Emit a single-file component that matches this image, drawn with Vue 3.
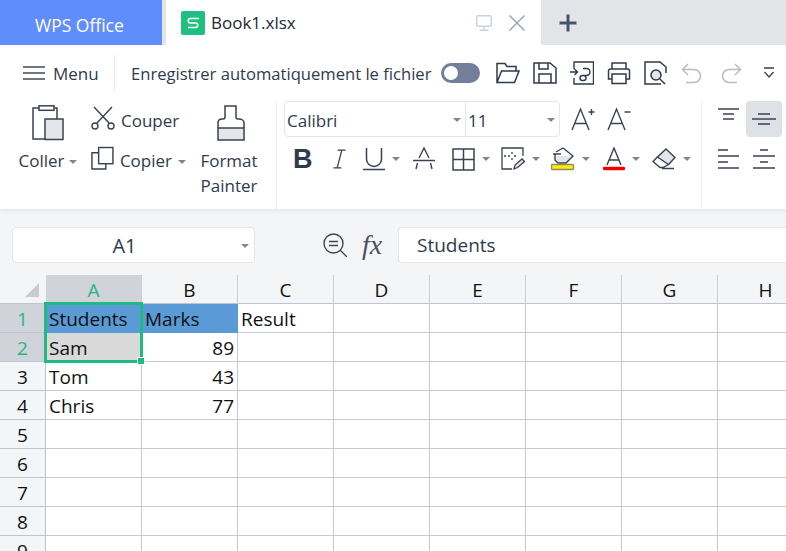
<script setup>
const columns = ["A", "B", "C", "D", "E", "F", "G", "H"];

const rows = [
  ["Students", "Marks", "Result"],
  ["Sam", "89"],
  ["Tom", "43"],
  ["Chris", "77"],
  [],
  [],
  [],
  [],
  [],
];

const isNumber = (value) => /^\d+$/.test(value || "");
</script>

<template>
  <div class="app">
    <div class="tabbar">
      <div class="home-tab">WPS Office</div>
      <div class="doc-tab">
        <span class="sheet-logo">
          <svg width="24" height="24" viewBox="0 0 24 24">
            <rect width="24" height="24" rx="2" fill="#1fc07f" />
            <path d="M18 7.5H9.500a2.200 2.200 0 0 0 0 4.500h5a2.200 2.200 0 0 1 0 4.500H7" fill="none" stroke="#fff" stroke-width="1.600" />
          </svg>
        </span>
        <span class="doc-name">Book1.xlsx</span>
        <span class="doc-actions">
          <svg width="18" height="18" viewBox="0 0 18 18" fill="none" stroke="#c9d1e0" stroke-width="1.400">
            <rect x="1.700" y="1.700" width="14.600" height="10.600" rx="1" />
            <path d="M9 12.500V16M4.500 16.300h9" />
          </svg>
          <svg width="18" height="18" viewBox="0 0 18 18" fill="none" stroke="#9aa5bb" stroke-width="1.500">
            <path d="M1.500 1.500l15 15M16.500 1.500l-15 15" />
          </svg>
        </span>
      </div>
      <div class="tab-plus">
        <svg width="20" height="20" viewBox="0 0 20 20" fill="none" stroke="#46526e" stroke-width="3">
          <path d="M10 1.500v17M1.500 10h17" />
        </svg>
      </div>
    </div>

    <div class="quickbar">
      <div class="menu-btn">
        <svg width="22" height="16" viewBox="0 0 22 16" fill="none" stroke="#444a55" stroke-width="1.500">
          <path d="M0 2h22M0 8h22M0 14h22" />
        </svg>
        <span>Menu</span>
      </div>
      <div class="quick-sep"></div>
      <span class="autosave">Enregistrer automatiquement le fichier</span>
      <span class="toggle"><span class="knob"></span></span>
      <div class="quick-icons">
        <svg width="24" height="22" viewBox="0 0 24 22" fill="none" stroke="#2f3a4c" stroke-width="1.500">
          <path d="M1 20.500V1.500h8l2 3h9V9M1 20.500h17.500L23 9H5.500L1 20.500z" />
        </svg>
        <svg width="24" height="22" viewBox="0 0 24 22" fill="none" stroke="#2f3a4c" stroke-width="1.500">
          <path d="M1 1h16l6 5v15H1V1zM6 1v6h9V1M6 21V12h12v9" />
        </svg>
        <svg width="24" height="24" viewBox="0 0 24 24" fill="none" stroke="#2f3a4c" stroke-width="1.400">
          <path d="M4 8V1h19.500v22H4V17M0 11h7M4.500 8l3 3-3 3" />
          <path d="M13 7.500h3.500a3.500 3.500 0 0 1 0 7h-4a2.500 2.500 0 0 0 0 5h1a2.500 2.500 0 0 0 0-5" />
        </svg>
        <svg width="24" height="24" viewBox="0 0 24 24" fill="none" stroke="#2f3a4c" stroke-width="1.500">
          <path d="M5 8V2h14v6M5 18H1.500V10a2 2 0 0 1 2-2h17a2 2 0 0 1 2 2v8H19M5 13h14v9.500H5V13z" />
        </svg>
        <svg width="24" height="24" viewBox="0 0 24 24" fill="none" stroke="#2f3a4c" stroke-width="1.500">
          <path d="M17 23H1V1h15l6 5v6" />
          <circle cx="12" cy="14" r="5" fill="#e4e6e9" />
          <path d="M16 18l5 5" />
        </svg>
        <svg width="22" height="24" viewBox="0 0 22 24" fill="none" stroke="#b9bcc2" stroke-width="1.500">
          <path d="M7 3L1.500 8.500 7 14M2 8.500h11a6.500 6.500 0 0 1 6.500 6.500v0a6.500 6.500 0 0 1-6.500 6.500H5" />
        </svg>
        <svg class="redo" width="22" height="24" viewBox="0 0 22 24" fill="none" stroke="#b9bcc2" stroke-width="1.500">
          <path d="M15 3l5.500 5.500L15 14M20 8.500H9A6.500 6.500 0 0 0 2.500 15v0A6.500 6.500 0 0 0 9 21.500h8" />
        </svg>
        <svg class="more" width="12" height="12" viewBox="0 0 12 12" fill="none" stroke="#3a4150" stroke-width="1.300">
          <path d="M1 1h10M1.500 5L6 10l4.500-5" />
        </svg>
      </div>
    </div>

    <div class="ribbon">
      <div class="group clipboard">
        <div class="big-btn paste">
          <svg width="32" height="36" viewBox="0 0 32 36" fill="none" stroke="#3a4150" stroke-width="1.500">
            <path d="M8 3H1v31h12" />
            <path d="M22 3h3v11" />
            <rect x="7" y="0.800" width="15" height="4.500" fill="#fff" />
            <rect x="13" y="14" width="18" height="20.500" fill="#e4e6e9" />
          </svg>
          <span class="label">Coller<i class="caret"></i></span>
        </div>
        <div class="cut-copy">
          <div class="small-btn">
            <svg width="24" height="24" viewBox="0 0 24 24" fill="none" stroke="#3a4150" stroke-width="1.400">
              <path d="M3 1l15 16M21 1L6 17" />
              <circle cx="4" cy="20" r="3" />
              <circle cx="20" cy="20" r="3" />
            </svg>
            <span>Couper</span>
          </div>
          <div class="small-btn">
            <svg width="24" height="24" viewBox="0 0 24 24" fill="none" stroke="#3a4150" stroke-width="1.500">
              <path d="M8 6.500H1v17h14.500V18" />
              <rect x="8" y="1" width="15" height="17" fill="#fff" />
            </svg>
            <span>Copier<i class="caret wide"></i></span>
          </div>
        </div>
        <div class="big-btn painter">
          <svg width="28" height="36" viewBox="0 0 28 36" fill="none" stroke="#3a4150" stroke-width="1.500">
            <path d="M1 23h26v12H1z" fill="#e4e6e9" />
            <path d="M1 23v-5c0-3 2-4 4-4h1c1.500 0 2-1 2-2V1h11v11c0 1 .5 2 2 2h1c2 0 5 1 5 4v5" />
          </svg>
          <span class="label">Format<br />Painter</span>
        </div>
      </div>

      <div class="group font">
        <div class="font-top">
          <div class="selects">
            <div class="select family">Calibri<i class="caret"></i></div>
            <div class="select size">11<i class="caret"></i></div>
          </div>
          <div class="grow-btns">
            <svg width="24" height="24" viewBox="0 0 24 24" fill="none" stroke="#3a4150" stroke-width="1.400">
              <path d="M1 23L9.500 2 18 23M4 16.500h11M17.500 5h6M20.500 2v6" />
            </svg>
            <svg width="24" height="24" viewBox="0 0 24 24" fill="none" stroke="#3a4150" stroke-width="1.400">
              <path d="M1 23L9.500 2 18 23M4 16.500h11M17.500 5h6" />
            </svg>
          </div>
        </div>
        <div class="font-tools">
          <span class="b-glyph">B</span>
          <svg class="t-italic" width="13" height="22" viewBox="0 0 14 22" fill="none" stroke="#3a4150" stroke-width="1.400">
            <path d="M5 1.500h8.500M0.500 20.500H9M9.500 1.500L4.500 20.500" />
          </svg>
          <span class="tool t-under">
            <svg width="22" height="24" viewBox="0 0 22 24" fill="none" stroke="#3a4150" stroke-width="1.500">
              <path d="M3.500 1v11a7.500 7.500 0 0 0 15 0V1M0 22.500h22" />
            </svg>
            <i class="caret"></i>
          </span>
          <svg class="t-strike" width="22" height="24" viewBox="0 0 22 24" fill="none" stroke="#3a4150" stroke-width="1.400">
            <path d="M6 11L11 1l5 10M4.500 16l-1.500 6M17.500 16l1.500 6M0 13.500h22" />
          </svg>
          <span class="tool t-border">
            <svg width="23" height="23" viewBox="0 0 23 23" fill="none" stroke="#3a4150" stroke-width="1.500">
              <path d="M1 1h21v21H1zM11.500 1v21M1 11.500h21" />
            </svg>
            <i class="caret"></i>
          </span>
          <span class="tool t-draw">
            <svg width="24" height="24" viewBox="0 0 24 24" fill="none" stroke="#3a4150" stroke-width="1.300">
              <path d="M22 9V1H1v21h10M3 9h2M7 9h2M13 9h2M11 5v2M11 11v2" />
              <path d="M13 22l1-4 7-6 2.500 2.500-7 6-3.500 1.500z" fill="#e4e6e9" />
            </svg>
            <i class="caret"></i>
          </span>
          <span class="tool t-fill">
            <svg width="24" height="24" viewBox="0 0 24 24" fill="none" stroke="#3a4150" stroke-width="1.400">
              <path d="M5 9h16l-6 7H7z" fill="#e4e6e9" stroke="none" />
              <path d="M12 1l10 8-7 7H7l-3-3V7M2 7h8M5 5l7-4" />
              <rect x="0.500" y="17.500" width="22" height="5" rx="1" fill="#ffee00" stroke="#8d8d6a" />
            </svg>
            <i class="caret"></i>
          </span>
          <span class="tool t-color">
            <svg width="22" height="24" viewBox="0 0 22 24" fill="none" stroke="#3a4150" stroke-width="1.400">
              <path d="M4 18L11 1l7 17M6.500 13h9" />
              <path d="M1.500 21.500h19" stroke="#f00000" stroke-width="3.400" stroke-linecap="round" />
            </svg>
            <i class="caret"></i>
          </span>
          <span class="tool t-erase">
            <svg width="24" height="22" viewBox="0 0 24 22" fill="none" stroke="#3a4150" stroke-width="1.400">
              <path d="M14 1l9 8.500-6.500 7L5.500 9z" fill="#e4e6e9" />
              <path d="M5.500 9L1 13.500l7 6h3l5.500-3M10 20.500h12" />
            </svg>
            <i class="caret"></i>
          </span>
        </div>
      </div>

      <div class="group align">
        <span class="align-btn top">
          <svg width="21" height="12" viewBox="0 0 21 12" fill="none" stroke="#3a4150" stroke-width="1.400"><path d="M0 1h21M5 6h11M5 11h11" /></svg>
        </span>
        <span class="align-btn active">
          <svg width="24" height="12" viewBox="0 0 24 12" fill="none" stroke="#3a4150" stroke-width="1.400"><path d="M6 1h12M0 6h24M6 11h12" /></svg>
        </span>
        <span class="align-btn">
          <svg width="21" height="20" viewBox="0 0 21 20" fill="none" stroke="#3a4150" stroke-width="1.400"><path d="M0 1h10M0 7h21M0 13h10M0 19h21" /></svg>
        </span>
        <span class="align-btn">
          <svg width="22" height="20" viewBox="0 0 22 20" fill="none" stroke="#3a4150" stroke-width="1.400"><path d="M7 1h8M0 7h22M7 13h8M0 19h22" /></svg>
        </span>
      </div>
    </div>

    <div class="formula">
      <div class="name-box">A1<i class="caret"></i></div>
      <svg class="find" width="24" height="24" viewBox="0 0 24 24" fill="none" stroke="#3f4859" stroke-width="1.400">
        <circle cx="10.500" cy="10.500" r="9.500" />
        <path d="M17.500 17.500L24 24M6 8.500h9M6 12.500h9" />
      </svg>
      <span class="fx">fx</span>
      <div class="formula-input">Students</div>
    </div>

    <div class="sheet">
      <div class="col-heads">
        <div class="corner"><span class="corner-mark"></span></div>
        <div v-for="(col, c) in columns" :key="col" class="col-head" :class="{ on: c === 0 }">{{ col }}</div>
      </div>
      <div v-for="(row, r) in rows" :key="r" class="row">
        <div class="row-head" :class="{ on: r < 2 }">{{ r + 1 }}</div>
        <div
          v-for="(col, c) in columns"
          :key="col"
          class="cell"
          :class="{
            blue: r === 0 && c < 2,
            picked: r === 1 && c === 0,
            num: isNumber(row[c]),
          }"
        >
          {{ row[c] }}
        </div>
      </div>
      <div class="selection"><span class="handle"></span></div>
    </div>
  </div>
</template>

<style>
html,
body {
  margin: 0;
  overflow: hidden;
}
</style>

<style scoped>
.app {
  width: 786px;
  height: 551px;
  overflow: hidden;
  background: #fff;
  font-family: "Open Sans", "Noto Sans", sans-serif;
  color: #2f3a4c;
}

.tabbar {
  display: flex;
  height: 45px;
  background: #e2e4e8;
}

.home-tab {
  width: 162px;
  box-sizing: border-box;
  padding-left: 35px;
  line-height: 50px;
  background: #5f8dfb;
  color: #fff;
  font-size: 17.500px;
}

.doc-tab {
  display: flex;
  align-items: center;
  width: 375px;
  margin-left: 4px;
  padding-left: 15px;
  box-sizing: border-box;
  background: #fff;
}

.sheet-logo {
  display: flex;
}

.doc-name {
  margin-left: 6px;
  font-size: 17px;
  color: #1f2633;
}

.doc-actions {
  display: flex;
  gap: 15px;
  margin-left: auto;
  margin-right: 15px;
}

.tab-plus {
  display: flex;
  align-items: center;
  margin-left: 17px;
}

.quickbar {
  display: flex;
  align-items: center;
  height: 56px;
  box-sizing: border-box;
  padding-left: 23px;
  font-size: 17px;
}

.menu-btn {
  display: flex;
  align-items: center;
  gap: 8px;
  width: 91px;
}

.quick-sep {
  width: 1px;
  height: 36px;
  background: #e6e8eb;
}

.autosave {
  width: 301px;
  margin-left: 16px;
  font-size: 16.600px;
  white-space: nowrap;
}

.toggle {
  display: flex;
  align-items: center;
  width: 39px;
  height: 20px;
  margin-left: 9px;
  padding-left: 3px;
  box-sizing: border-box;
  border-radius: 10px;
  background: #737f9a;
}

.knob {
  width: 14px;
  height: 14px;
  border-radius: 50%;
  background: #fff;
}

.quick-icons {
  display: flex;
  align-items: center;
  gap: 13px;
  margin-left: 16px;
}

.redo {
  margin-left: 4px;
}

.more {
  margin-left: 8px;
}

.ribbon {
  display: flex;
  height: 108px;
  box-sizing: border-box;
  box-shadow: 0 2px 4px rgba(30, 40, 60, 0.07);
  position: relative;
  font-size: 17px;
}

.group {
  box-sizing: border-box;
  height: 108px;
  border-right: 1px solid #eceef0;
}

.clipboard {
  display: flex;
  width: 277px;
  padding-left: 19px;
}

.big-btn {
  display: flex;
  flex-direction: column;
  align-items: center;
}

.label {
  text-align: center;
  line-height: 25px;
  white-space: nowrap;
}

.paste {
  width: 57px;
  padding-top: 4px;
}

.paste .label {
  margin-top: 7px;
}

.cut-copy {
  display: flex;
  flex-direction: column;
  gap: 16px;
  margin-left: 14px;
  padding-top: 7px;
  width: 96px;
}

.small-btn {
  display: flex;
  align-items: center;
  gap: 6px;
  height: 24px;
  white-space: nowrap;
}

.small-btn svg {
  margin: 0 0 4px 1px;
}

.painter {
  width: 58px;
  margin-left: 14px;
  padding-top: 4px;
}

.painter svg {
  margin-left: 3px;
}

.painter .label {
  margin-top: 7px;
}

.caret {
  display: inline-block;
  width: 0;
  height: 0;
  margin-left: 4px;
  vertical-align: middle;
  border-left: 4px solid transparent;
  border-right: 4px solid transparent;
  border-top: 4px solid #7d8699;
}

.caret.wide {
  margin-left: 6px;
}

.font {
  width: 425px;
  padding-left: 7px;
}

.font-top {
  display: flex;
  align-items: center;
  height: 36px;
}

.selects {
  display: flex;
  width: 276px;
  height: 36px;
  box-sizing: border-box;
  border: 1px solid #e3e5e8;
  border-radius: 4px;
}

.select {
  display: flex;
  align-items: center;
  justify-content: space-between;
  box-sizing: border-box;
  padding: 2px 4px 0 2px;
}

.family {
  width: 181px;
  border-right: 1px solid #e3e5e8;
}

.size {
  flex: 1;
}

.grow-btns {
  display: flex;
  gap: 12px;
  margin-left: 11px;
}

.font-tools {
  display: flex;
  align-items: center;
  height: 30px;
  margin-top: 7px;
  padding-left: 9px;
}

.b-glyph {
  width: 18px;
  font-size: 27px;
  font-weight: 700;
  font-family: "Liberation Sans", sans-serif;
  line-height: 30px;
  color: #2f3a4c;
}

.t-italic {
  margin-left: 22px;
}

.tool {
  display: flex;
  align-items: center;
}

.tool .caret {
  margin-left: 7px;
}

.t-under {
  margin-left: 17px;
}

.t-strike {
  margin-left: 13px;
}

.t-border {
  margin-left: 17px;
}

.t-draw {
  margin-left: 11px;
}

.t-fill {
  margin-left: 11px;
}

.t-color {
  margin-left: 13px;
}

.t-erase {
  margin-left: 12px;
}

.align {
  display: grid;
  grid-template-columns: 36px 36px;
  grid-auto-rows: 36px;
  row-gap: 4px;
  align-content: start;
  padding-left: 8px;
  border-right: 0;
}

.align-btn {
  display: flex;
  align-items: center;
  justify-content: center;
  border-radius: 4px;
}

.align-btn.top {
  align-items: flex-start;
  padding-top: 7px;
}

.align-btn.active {
  background: #dee1e5;
}

.formula {
  display: flex;
  align-items: center;
  height: 66px;
  padding: 6px 0 0 12px;
  box-sizing: border-box;
  background: #f4f5f7;
}

.name-box {
  display: flex;
  align-items: center;
  justify-content: center;
  position: relative;
  width: 243px;
  height: 36px;
  padding-right: 18px;
  box-sizing: border-box;
  border: 1px solid #e3e5e8;
  border-radius: 4px;
  background: #fff;
  font-size: 20px;
}

.name-box .caret {
  position: absolute;
  right: 5px;
  top: 16px;
}

.find {
  margin-left: 68px;
}

.fx {
  margin-left: 15px;
  width: 36px;
  font-family: "Liberation Serif", serif;
  font-style: italic;
  font-size: 28px;
  color: #4a5262;
}

.formula-input {
  display: flex;
  align-items: center;
  flex: 1;
  height: 36px;
  padding-left: 18px;
  box-sizing: border-box;
  border: 1px solid #e3e5e8;
  border-right: 0;
  border-radius: 4px 0 0 4px;
  background: #fff;
  font-size: 19px;
}

.sheet {
  position: relative;
  color: #111;
  font-size: 19px;
}

.col-heads,
.row {
  display: grid;
  grid-template-columns: 46px repeat(8, 96px);
  grid-template-rows: 29px;
}

.col-heads {
  height: 29px;
  background: #f4f5f7;
}

.corner {
  position: relative;
  box-sizing: border-box;
  border-bottom: 1px solid #bdc4d4;
}

.corner-mark {
  position: absolute;
  right: 7px;
  bottom: 6px;
  width: 0;
  height: 0;
  border-left: 14px solid transparent;
  border-bottom: 14px solid #c9cbce;
}

.col-head {
  padding-top: 1px;
  text-align: center;
  line-height: 28px;
  border-right: 1px solid #c9cedb;
  border-bottom: 1px solid #bdc4d4;
  box-sizing: border-box;
}

.col-head.on {
  background: #d0d3da;
  color: #1fb981;
}

.row {
  height: 29px;
}

.row-head {
  padding-top: 1px;
  text-align: center;
  line-height: 28px;
  background: #f4f5f7;
  border-right: 1px solid #bdc4d4;
  border-bottom: 1px solid #bdc4d4;
  box-sizing: border-box;
}

.row-head.on {
  background: #d0d3da;
  color: #1fb981;
}

.cell {
  padding: 1px 3px 0 3px;
  line-height: 28px;
  border-right: 1px solid #c3c9d8;
  border-bottom: 1px solid #c3c9d8;
  box-sizing: border-box;
  overflow: hidden;
  white-space: nowrap;
}

.cell.blue {
  background: #5b9bd5;
  border-right-color: #5b9bd5;
  border-bottom-color: #5b9bd5;
}

.cell.picked {
  background: #d9d9d9;
}

.cell.num {
  text-align: right;
}

.selection {
  position: absolute;
  left: 44px;
  top: 27px;
  width: 99px;
  height: 61px;
  box-sizing: border-box;
  border: 3px solid #1fb981;
  pointer-events: none;
}

.handle {
  position: absolute;
  right: -5px;
  bottom: -5px;
  width: 6px;
  height: 6px;
  border: 1px solid #fff;
  background: #1fb981;
}
</style>
